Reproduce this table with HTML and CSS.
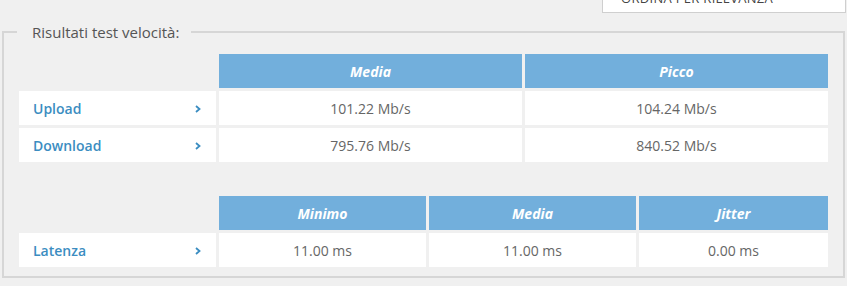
FILE: index.html
```html
<!DOCTYPE html>
<html lang="it">
<head>
<meta charset="utf-8">
<title>Risultati test velocità</title>
<link rel="stylesheet" href="styles.css">
</head>
<body>
<div class="topbar">
  <div class="sort-select">ORDINA PER RILEVANZA</div>
</div>
<fieldset class="results">
  <legend class="results-title">Risultati test velocità:</legend>
  <table class="speed-table">
    <thead>
      <tr>
        <th class="blank label-col"></th>
        <th class="col-half">Media</th>
        <th class="col-half">Picco</th>
      </tr>
    </thead>
    <tbody>
      <tr>
        <td class="label"><span>Upload</span><svg class="chev" width="6" height="8" viewBox="0 0 6 8"><polyline points="1,1 4.5,4 1,7" fill="none" stroke="currentColor" stroke-width="1.8"/></svg></td>
        <td class="value">101.22 Mb/s</td>
        <td class="value">104.24 Mb/s</td>
      </tr>
      <tr>
        <td class="label"><span>Download</span><svg class="chev" width="6" height="8" viewBox="0 0 6 8"><polyline points="1,1 4.5,4 1,7" fill="none" stroke="currentColor" stroke-width="1.8"/></svg></td>
        <td class="value">795.76 Mb/s</td>
        <td class="value">840.52 Mb/s</td>
      </tr>
    </tbody>
  </table>
  <table class="speed-table latency">
    <thead>
      <tr>
        <th class="blank label-col"></th>
        <th class="col-third">Minimo</th>
        <th class="col-third">Media</th>
        <th class="col-last">Jitter</th>
      </tr>
    </thead>
    <tbody>
      <tr>
        <td class="label"><span>Latenza</span><svg class="chev" width="6" height="8" viewBox="0 0 6 8"><polyline points="1,1 4.5,4 1,7" fill="none" stroke="currentColor" stroke-width="1.8"/></svg></td>
        <td class="value">11.00 ms</td>
        <td class="value">11.00 ms</td>
        <td class="value">0.00 ms</td>
      </tr>
    </tbody>
  </table>
</fieldset>
</body>
</html>
```
FILE: styles.css
```css
html, body {
  margin: 0;
  padding: 0;
  background: #f0f0f0;
  font-family: "Open Sans", "Liberation Sans", sans-serif;
}
.topbar {
  display: flex;
  justify-content: flex-end;
  height: 13px;
  overflow: visible;
  margin-bottom: 9px;
}
.sort-select {
  box-sizing: border-box;
  width: 244px;
  height: 30px;
  margin-top: -17px;
  margin-right: 1px;
  background: #fff;
  border: 1px solid #cfcfcf;
  padding-left: 18px;
  font-size: 13px;
  line-height: 28px;
  color: #444;
  letter-spacing: 0.3px;
}
.results {
  margin: 0 2px;
  border: 2px solid #d6d6d6;
  padding: 9px 12px 6px;
  min-width: 0;
}
.results-title {
  margin-left: 1px;
  padding: 0 12px 0 15px;
  font-size: 15px;
  line-height: 20px;
  color: #555;
}
.speed-table {
  width: 815px;
  border-collapse: separate;
  border-spacing: 3px;
  table-layout: fixed;
  font-size: 14px;
}
.speed-table.latency {
  margin-top: 28px;
}
.speed-table th,
.speed-table td {
  height: 34px;
  padding: 0;
  box-sizing: border-box;
}
.speed-table th {
  background: #72afdc;
  color: #fff;
  font-weight: 700;
  font-style: italic;
  text-align: center;
}
.speed-table th.blank {
  background: transparent;
}
.label-col { width: 197px; }
.col-half { width: 303px; }
.col-third { width: 207px; }
.col-last { width: 189px; }
.speed-table td {
  background: #fff;
}
.label {
  color: #3b8dc1;
  font-weight: 600;
}
.label {
  padding: 0 15px 0 14px !important;
}
.label span {
  float: left;
}
.chev {
  float: right;
  margin-top: 6px;
}
.value {
  text-align: center;
  color: #666;
}
```
